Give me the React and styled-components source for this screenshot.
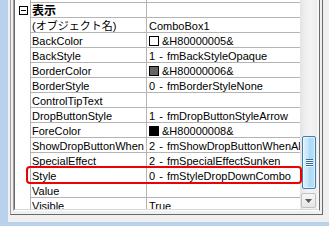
import React from "react";
import styled, { createGlobalStyle } from "styled-components";

const GlobalStyle = createGlobalStyle`
  html, body {
    margin: 0;
    padding: 0;
  }
  body {
    font-family: "Liberation Sans", "Noto Sans CJK JP", sans-serif;
    color: #000;
  }
`;

const Page = styled.div`
  width: 329px;
  height: 226px;
  box-sizing: border-box;
  padding: 0 0 4px 8px;
  background: #b9d1ea;
  display: flex;
  overflow: hidden;
`;

const Client = styled.div`
  flex: 1;
  display: flex;
  background: #f0f0f0;
  padding: 0 6px 7px 2px;
`;

const OuterFrame = styled.div`
  flex: 1;
  display: flex;
  border-left: 1px solid #a0a0a0;
  border-right: 1px solid #696969;
  border-bottom: 1px solid #696969;
  padding: 0 2px 3px 2px;
`;

const InnerFrame = styled.div`
  flex: 1;
  display: flex;
  border-left: 1px solid #a0a0a0;
  border-right: 1px solid #696969;
  border-bottom: 1px solid #ffffff;
`;

const ListBox = styled.div`
  position: relative;
  flex: 1;
  display: flex;
  background: #fff;
  border-left: 1px solid #696969;
  border-right: 2px solid #f6f6f6;
  border-bottom: 1px solid #d8d8d8;
  overflow: hidden;
`;

const Grid = styled.div`
  width: 285px;
  flex-shrink: 0;
  display: flex;
  flex-direction: column;
  overflow: hidden;
`;

const Row = styled.div`
  display: flex;
  flex-shrink: 0;
  height: ${(p) => (p.$stub ? 3 : 15)}px;
`;

const Gutter = styled.div`
  width: 15px;
  flex-shrink: 0;
  box-sizing: border-box;
  padding-left: 4px;
  display: flex;
  align-items: center;
`;

const CollapseBox = styled.span`
  position: relative;
  width: 9px;
  height: 9px;
  box-sizing: border-box;
  border: 1px solid #000;
  background: #fff;
  &::after {
    content: "";
    position: absolute;
    left: 1px;
    top: 3px;
    width: 5px;
    height: 1px;
    background: #000;
  }
`;

const Cell = styled.div`
  box-sizing: border-box;
  height: 100%;
  padding-top: 2px;
  border-left: 1px solid #b4b4b4;
  border-bottom: 1px solid #b4b4b4;
  display: flex;
  align-items: center;
  white-space: nowrap;
  overflow: hidden;
  font-size: 11px;
  line-height: 12px;
`;

const NameCell = styled(Cell)`
  width: 116px;
  flex-shrink: 0;
  padding-left: 1px;
  font-weight: ${(p) => (p.$bold ? 700 : 400)};
  font-size: ${(p) => (p.$bold ? 12 : 11)}px;
`;

const ValueCell = styled(Cell)`
  flex: 1;
  min-width: 0;
  padding-left: 2px;
  word-spacing: 1px;
`;

const Swatch = styled.span`
  width: 10px;
  height: 10px;
  box-sizing: border-box;
  flex-shrink: 0;
  margin-right: 3px;
  border: 1px solid #000;
  background: ${(p) => p.$color};
`;

const Scrollbar = styled.div`
  width: 17px;
  flex-shrink: 0;
  display: flex;
  flex-direction: column;
  background: linear-gradient(
    to right,
    #e3e3e3,
    #efefef 30%,
    #f4f4f4 60%,
    #ececec
  );
`;

const Thumb = styled.div`
  margin: 136px 1px 0 2px;
  height: 53px;
  box-sizing: border-box;
  border: 1px solid #3c7fb1;
  border-radius: 2px;
  background: linear-gradient(
    to right,
    #dff1fc,
    #c6e6f9 40%,
    #addaf5 55%,
    #bde0f7
  );
  box-shadow: inset 0 0 0 1px rgba(255, 255, 255, 0.55);
  display: flex;
  align-items: center;
  justify-content: center;
`;

const Grip = styled.div`
  width: 7px;
  height: 8px;
  background: repeating-linear-gradient(
    to bottom,
    #3a6a96 0 1px,
    #eef7fd 1px 2px
  );
`;

const Spacer = styled.div`
  flex: 1;
`;

const DownButton = styled.div`
  height: 15px;
  margin: 0 1px 1px 1px;
  box-sizing: border-box;
  border: 1px solid #c2c2c2;
  border-radius: 2px;
  background: linear-gradient(to bottom, #f6f6f6, #e6e6e6);
  display: flex;
  align-items: center;
  justify-content: center;
`;

const Highlight = styled.div`
  position: absolute;
  left: 11px;
  top: 166px;
  width: 276px;
  height: 18px;
  box-sizing: border-box;
  border: 2px solid #f00000;
  border-radius: 4px;
  pointer-events: none;
`;

const rows = [
  { name: "(オブジェクト名)", value: "ComboBox1" },
  { name: "BackColor", value: "&H80000005&", swatch: "#ffffff" },
  { name: "BackStyle", value: "1 - fmBackStyleOpaque" },
  { name: "BorderColor", value: "&H80000006&", swatch: "#646464" },
  { name: "BorderStyle", value: "0 - fmBorderStyleNone" },
  { name: "ControlTipText", value: "" },
  { name: "DropButtonStyle", value: "1 - fmDropButtonStyleArrow" },
  { name: "ForeColor", value: "&H80000008&", swatch: "#000000" },
  { name: "ShowDropButtonWhen", value: "2 - fmShowDropButtonWhenAlways" },
  { name: "SpecialEffect", value: "2 - fmSpecialEffectSunken" },
  { name: "Style", value: "0 - fmStyleDropDownCombo" },
  { name: "Value", value: "" },
  { name: "Visible", value: "True" },
];

function App() {
  return (
    <>
      <GlobalStyle />
      <Page>
        <Client>
          <OuterFrame>
            <InnerFrame>
              <ListBox>
                <Grid>
                  <Row $stub>
                    <Gutter />
                    <NameCell />
                    <ValueCell />
                  </Row>
                  <Row>
                    <Gutter>
                      <CollapseBox />
                    </Gutter>
                    <NameCell $bold>表示</NameCell>
                    <ValueCell />
                  </Row>
                  {rows.map((r) => (
                    <Row key={r.name}>
                      <Gutter />
                      <NameCell>{r.name}</NameCell>
                      <ValueCell>
                        {r.swatch && <Swatch $color={r.swatch} />}
                        {r.value}
                      </ValueCell>
                    </Row>
                  ))}
                </Grid>
                <Scrollbar>
                  <Thumb>
                    <Grip />
                  </Thumb>
                  <Spacer />
                  <DownButton>
                    <svg width="7" height="4" viewBox="0 0 7 4">
                      <path d="M0 0 H7 L3.5 4 Z" fill="#5a5a5a" />
                    </svg>
                  </DownButton>
                </Scrollbar>
                <Highlight />
              </ListBox>
            </InnerFrame>
          </OuterFrame>
        </Client>
      </Page>
    </>
  );
}

export default App;
